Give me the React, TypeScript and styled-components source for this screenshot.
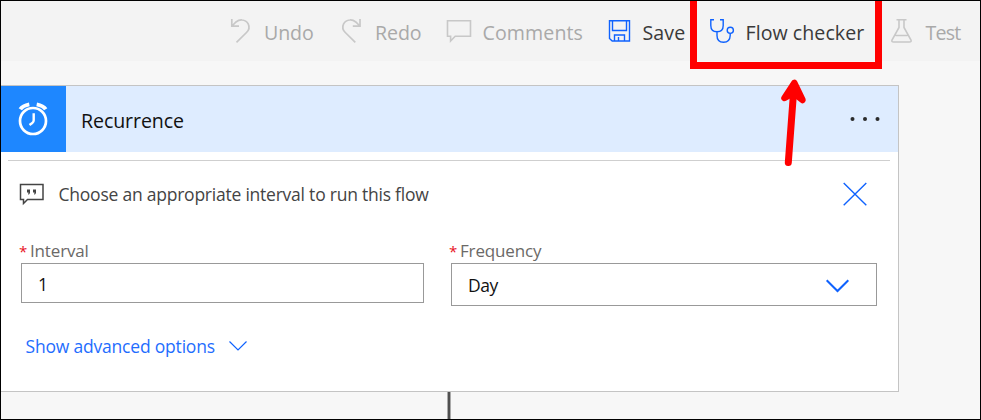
import React from "react";
import styled, { createGlobalStyle } from "styled-components";

const GlobalStyle = createGlobalStyle`
  *, *::before, *::after { box-sizing: border-box; }
  body {
    margin: 0;
    font-family: "Open Sans", "Noto Sans", sans-serif;
    font-weight: 400;
    color: #111;
  }
`;

const Designer = styled.div`
  position: relative;
  width: 981px;
  height: 420px;
  border: 1px solid #000;
  background: #f7f7f7;
  overflow: hidden;
`;

const Toolbar = styled.nav`
  display: grid;
  grid-template-columns: 111px 105px 162px 101px 181px 90px;
  align-items: center;
  height: 60px;
  padding-left: 229px;
  background: #f3f3f3;
`;

const Command = styled.button<{ $enabled?: boolean; $gap: number; $spacing: number }>`
  display: flex;
  align-items: center;
  gap: ${(p) => p.$gap}px;
  height: 60px;
  padding: 4px 0 0;
  border: 0;
  background: none;
  font: 400 19.6px/28px "Open Sans", "Noto Sans", sans-serif;
  letter-spacing: ${(p) => p.$spacing}px;
  white-space: nowrap;
  color: ${(p) => (p.$enabled ? "#3a3a3a" : "#a9a9a9")};

  svg {
    flex: none;
    margin-top: -4px;
    color: ${(p) => (p.$enabled ? "#0f62fe" : "#c8c8c8")};
  }
`;

const Icon = styled.svg`
  display: block;
  fill: none;
  stroke: currentColor;
  overflow: visible;
`;

const Card = styled.section`
  width: 898px;
  height: 307px;
  margin-top: 24px;
  border: 1px solid #c4c4c4;
  border-left: 0;
  background: #fff;
`;

const CardHeader = styled.header`
  display: flex;
  align-items: center;
  height: 66px;
  background: #deecff;
`;

const Connector = styled.div`
  display: grid;
  place-items: center;
  width: 65px;
  height: 66px;
  padding-right: 2px;
  background: #1e87ff;
  color: #fff;
`;

const Title = styled.h2`
  flex: 1;
  margin: 4px 0 0 15px;
  font-size: 19.6px;
  line-height: 28px;
  font-weight: 400;
  letter-spacing: -0.1px;
`;

const MoreIcon = styled(Icon)`
  margin-right: 17px;
  color: #2b2b2b;
  fill: currentColor;
  stroke: none;
`;

const Divider = styled.hr`
  height: 1px;
  margin: 8px 8px 0 7px;
  border: 0;
  background: #cfcfcf;
`;

const Hint = styled.div`
  display: flex;
  align-items: center;
  height: 34px;
  margin-top: 16px;
  padding: 0 31px 0 18px;
  color: #444;
`;

const HintText = styled.p`
  flex: 1;
  margin: 0 0 0 14.5px;
  font-size: 17.5px;
  line-height: 24px;
  letter-spacing: -0.23px;
`;

const CloseIcon = styled(Icon)`
  color: #0f62fe;
`;

const Fields = styled.div`
  display: grid;
  grid-template-columns: 403px 426px;
  column-gap: 27px;
  align-items: start;
  margin: 28px 0 0 20px;
`;

const FieldLabel = styled.label`
  display: flex;
  height: 24px;
  margin-left: -2px;
  font-size: 17px;
  line-height: 24px;
  letter-spacing: -0.15px;
  color: #6b6967;
`;

const Required = styled.span`
  width: 11px;
  color: #e81123;
  font-size: 15px;
`;

const Control = styled.div<{ $height: number }>`
  display: flex;
  align-items: center;
  justify-content: space-between;
  height: ${(p) => p.$height}px;
  padding: 0 27px 0 16px;
  border: 1px solid #999;
  font-size: 17.5px;
  letter-spacing: -0.4px;
`;

const ControlValue = styled.span<{ $shift?: number }>`
  padding-top: ${(p) => p.$shift ?? 0}px;
`;

const ChevronIcon = styled(Icon)`
  color: #0f62fe;
`;

const Advanced = styled.button`
  display: flex;
  align-items: center;
  gap: 14px;
  height: 28px;
  margin: 26px 0 0 24.5px;
  padding: 0;
  border: 0;
  background: none;
  font: 400 17.5px/24px "Open Sans", "Noto Sans", sans-serif;
  letter-spacing: -0.2px;
  color: #1f6dfe;
`;

const Edge = styled.div`
  width: 4px;
  height: 28px;
  margin-left: 446px;
  border: solid #aaa;
  border-width: 0 1px;
  background: #505050;
`;

const Highlight = styled.div`
  position: absolute;
  left: 689px;
  top: 0;
  width: 192px;
  height: 68px;
  border: 7px solid #f00;
  border-top: 0;
`;

const Pointer = styled.svg`
  position: absolute;
  left: 779px;
  top: 77px;
`;

const UndoIcon = () => (
  <Icon width="26" height="26" viewBox="0 0 26 26" strokeWidth="1.7">
    <path d="M1.8 1v7.2H9M2 8L6 4Q9 1.700 12 2Q16.200 2.300 18.200 5.800Q20.500 10.500 16.500 14.500L6.500 24.300" />
  </Icon>
);

const RedoIcon = () => (
  <Icon width="26" height="26" viewBox="0 0 26 26" strokeWidth="1.7">
    <path d="M19 1v7.200H11.800M18.800 8L14.800 4Q11.800 1.700 8.800 2Q4.600 2.300 2.600 5.800Q.3 10.500 4.300 14.500L14.300 24.300" />
  </Icon>
);

const CommentIcon = () => (
  <Icon width="26" height="26" viewBox="0 0 26 26" strokeWidth="1.6">
    <path d="M1.500 2.800H24.500V18.300H9.200L4.600 23V18.300H1.500Z" />
  </Icon>
);

const SaveIcon = () => (
  <Icon width="26" height="26" viewBox="0 0 26 26" strokeWidth="1.4">
    <path d="M1.500 2.800H21.500V23H4.200L1.500 20.500ZM4.500 2.800V12.500H18.500V2.800M6.500 23V17H16.500V23M10.500 19V23" />
  </Icon>
);

const CheckerIcon = () => (
  <Icon width="26" height="26" viewBox="0 0 26 26" strokeWidth="1.4">
    <path d="M5 1.700H1.800V7.500Q1.800 13.700 8 13.700T14.200 7.500V1.700H11M8 13.700V17.500Q8 24.200 14.500 24.200T21.200 17.500V15.500" />
    <circle cx="21.300" cy="12.300" r="3.100" />
  </Icon>
);

const TestIcon = () => (
  <Icon width="26" height="26" viewBox="0 0 26 26" strokeWidth="1.6">
    <path d="M6.500 1.800H16.500M9 1.800V9.500L2 22Q1.300 24 3.500 24H19.500Q21.700 24 21 22L14 9.500V1.800M5.500 17.500H17.500" />
  </Icon>
);

const AlarmIcon = () => (
  <Icon width="32" height="36" viewBox="0 0 32 36">
    <circle cx="16" cy="20" r="13" strokeWidth="2.700" />
    <path d="M16.700 12.300V19.200Q16.700 21 15.300 22L12.500 24" strokeWidth="2.400" />
    <path d="M3.300 8.300Q5.700 4.500 12.300 3.300M28.700 8.300Q26.300 4.500 19.700 3.300" strokeWidth="3.900" />
  </Icon>
);

const QuoteIcon = () => (
  <Icon width="25" height="24" viewBox="0 0 25 24" strokeWidth="1.5">
    <path d="M1.500 2.500H24V17.500H8.500L4.500 21.500V17.500H1.500Z" />
    <path
      d="M8 7.500h3v3.400l-1 1.500h-.9l.4-1.900H8zM14 7.500h3v3.400l-1 1.500h-.9l.4-1.900H14z"
      fill="currentColor"
      stroke="none"
    />
  </Icon>
);

const commands = [
  { label: "Undo", icon: <UndoIcon />, gap: 8, spacing: -0.1 },
  { label: "Redo", icon: <RedoIcon />, gap: 8, spacing: -0.1 },
  { label: "Comments", icon: <CommentIcon />, gap: 10.5, spacing: 0.1 },
  { label: "Save", icon: <SaveIcon />, gap: 8.5, spacing: 0.1, enabled: true },
  { label: "Flow checker", icon: <CheckerIcon />, gap: 10.5, spacing: 0.05, enabled: true },
  { label: "Test", icon: <TestIcon />, gap: 9.5, spacing: -0.8 },
];

export default function App() {
  return (
    <>
      <GlobalStyle />
      <Designer>
        <Toolbar>
          {commands.map((c) => (
            <Command key={c.label} $enabled={c.enabled} $gap={c.gap} $spacing={c.spacing}>
              {c.icon}
              {c.label}
            </Command>
          ))}
        </Toolbar>
        <Card>
          <CardHeader>
            <Connector>
              <AlarmIcon />
            </Connector>
            <Title>Recurrence</Title>
            <MoreIcon width="32" height="6" viewBox="0 0 32 6">
              <circle cx="3.500" cy="3" r="2" />
              <circle cx="16" cy="3" r="2" />
              <circle cx="28.500" cy="3" r="2" />
            </MoreIcon>
          </CardHeader>
          <Divider />
          <Hint>
            <QuoteIcon />
            <HintText>Choose an appropriate interval to run this flow</HintText>
            <CloseIcon width="24" height="24" viewBox="0 0 24 24" strokeWidth="1.400">
              <path d="M.7 1L23.300 23.200M23.300 1L.7 23.200" />
            </CloseIcon>
          </Hint>
          <Fields>
            <div>
              <FieldLabel>
                <Required>*</Required>Interval
              </FieldLabel>
              <Control $height={40}>
                <ControlValue $shift={2}>1</ControlValue>
              </Control>
            </div>
            <div>
              <FieldLabel>
                <Required>*</Required>Frequency
              </FieldLabel>
              <Control $height={43}>
                <ControlValue>Day</ControlValue>
                <ChevronIcon width="23" height="12" viewBox="0 0 23 12" strokeWidth="2">
                  <path d="M.7 1.300L11.500 12L22.300 1.300" />
                </ChevronIcon>
              </Control>
            </div>
          </Fields>
          <Advanced>
            Show advanced options
            <ChevronIcon width="18" height="10" viewBox="0 0 18 10" strokeWidth="1.200">
              <path d="M.5 .5L9 9L17.500 .5" />
            </ChevronIcon>
          </Advanced>
        </Card>
        <Edge />
        <Highlight />
        <Pointer width="30" height="90" viewBox="0 0 30 90" fill="#f00" stroke="#f00" strokeLinecap="round" strokeLinejoin="round">
          <path d="M8.300 84.500L13.500 15" strokeWidth="7" />
          <path d="M14.300 5L4.500 20L13.500 15L22.500 22Z" strokeWidth="6.500" />
        </Pointer>
      </Designer>
    </>
  );
}
